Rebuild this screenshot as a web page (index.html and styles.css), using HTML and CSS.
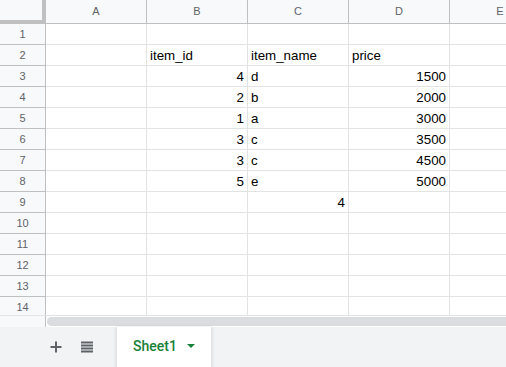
FILE: index.html
```html
<!DOCTYPE html>
<html lang="en">
<head>
  <meta charset="UTF-8" />
  <title>Sheet1</title>
  <link rel="stylesheet" href="styles.css">
</head>
<body>
  <div class="sheet">
    <div class="grid">
      <div class="corner"></div>
      <div class="col-head">A</div>
      <div class="col-head">B</div>
      <div class="col-head">C</div>
      <div class="col-head">D</div>
      <div class="col-head">E</div>

      <div class="row-head">1</div>
      <div class="cell"></div><div class="cell"></div><div class="cell"></div><div class="cell"></div><div class="cell"></div>

      <div class="row-head">2</div>
      <div class="cell"></div><div class="cell">item_id</div><div class="cell">item_name</div><div class="cell">price</div><div class="cell"></div>

      <div class="row-head">3</div>
      <div class="cell"></div><div class="cell num">4</div><div class="cell">d</div><div class="cell num">1500</div><div class="cell"></div>

      <div class="row-head">4</div>
      <div class="cell"></div><div class="cell num">2</div><div class="cell">b</div><div class="cell num">2000</div><div class="cell"></div>

      <div class="row-head">5</div>
      <div class="cell"></div><div class="cell num">1</div><div class="cell">a</div><div class="cell num">3000</div><div class="cell"></div>

      <div class="row-head">6</div>
      <div class="cell"></div><div class="cell num">3</div><div class="cell">c</div><div class="cell num">3500</div><div class="cell"></div>

      <div class="row-head">7</div>
      <div class="cell"></div><div class="cell num">3</div><div class="cell">c</div><div class="cell num">4500</div><div class="cell"></div>

      <div class="row-head">8</div>
      <div class="cell"></div><div class="cell num">5</div><div class="cell">e</div><div class="cell num">5000</div><div class="cell"></div>

      <div class="row-head">9</div>
      <div class="cell"></div><div class="cell"></div><div class="cell num">4</div><div class="cell"></div><div class="cell"></div>

      <div class="row-head">10</div>
      <div class="cell"></div><div class="cell"></div><div class="cell"></div><div class="cell"></div><div class="cell"></div>

      <div class="row-head">11</div>
      <div class="cell"></div><div class="cell"></div><div class="cell"></div><div class="cell"></div><div class="cell"></div>

      <div class="row-head">12</div>
      <div class="cell"></div><div class="cell"></div><div class="cell"></div><div class="cell"></div><div class="cell"></div>

      <div class="row-head">13</div>
      <div class="cell"></div><div class="cell"></div><div class="cell"></div><div class="cell"></div><div class="cell"></div>

      <div class="row-head">14</div>
      <div class="cell"></div><div class="cell"></div><div class="cell"></div><div class="cell"></div><div class="cell"></div>
    </div>

    <div class="hscroll">
      <div class="hscroll-gutter"></div>
      <div class="hscroll-track"><div class="hscroll-thumb"></div></div>
    </div>

    <div class="tabbar">
      <button class="tab-btn" title="Add sheet">
        <svg width="12" height="12" viewBox="0 0 12 12"><path d="M6 0.5v11M0.5 6h11" stroke="#5f6368" stroke-width="2" fill="none"/></svg>
      </button>
      <button class="tab-btn" title="All sheets">
        <svg width="12" height="12" viewBox="0 0 12 12" fill="#5f6368">
          <rect x="0" y="0.5" width="12" height="2"/>
          <rect x="0" y="3.5" width="12" height="2"/>
          <rect x="0" y="6.5" width="12" height="2"/>
          <rect x="0" y="9.5" width="12" height="2"/>
        </svg>
      </button>
      <div class="tab">
        <span class="tab-name">Sheet1</span>
        <span class="tab-arrow"></span>
      </div>
    </div>
  </div>
</body>
</html>
```

FILE: styles.css
```css
body {
  margin: 0;
  background: #fff;
  font-family: 'Liberation Sans', Arial, sans-serif;
}
.sheet {
  width: 506px;
  height: 367px;
  overflow: hidden;
}
.grid {
  display: grid;
  grid-template-columns: 46px 101px 101px 101px 101px 101px;
  grid-template-rows: 24px repeat(14, 21px);
  width: 506px;
  height: 315px;
  overflow: hidden;
}
.corner {
  background: #f8f9fa;
  border-right: 4px solid #c0c0c0;
  border-bottom: 4px solid #c0c0c0;
}
.col-head {
  background: #f8f9fa;
  border-right: 1px solid #c0c0c0;
  border-bottom: 1px solid #c0c0c0;
  color: #5f6368;
  font-size: 11px;
  display: flex;
  align-items: center;
  justify-content: center;
  padding-bottom: 1px;
}
.row-head {
  background: #f8f9fa;
  border-right: 1px solid #c0c0c0;
  border-bottom: 1px solid #c0c0c0;
  color: #5f6368;
  font-size: 11px;
  display: flex;
  align-items: center;
  justify-content: center;
}
.cell {
  border-right: 1px solid #e2e3e3;
  border-bottom: 1px solid #e2e3e3;
  font-size: 10pt;
  line-height: 17px;
  color: #000;
  display: flex;
  align-items: flex-end;
  padding: 0 3px 1px 3px;
  white-space: nowrap;
  overflow: hidden;
}
.cell.num {
  justify-content: flex-end;
}
.hscroll {
  display: flex;
  height: 11px;
  border-top: 1px solid #e2e3e3;
}
.hscroll-gutter {
  width: 45px;
  background: #f8f9fa;
  border-right: 1px solid #c0c0c0;
}
.hscroll-track {
  flex: 1;
  padding: 1px 0 1px 1px;
}
.hscroll-thumb {
  height: 9px;
  background: #dadce0;
  border-radius: 5px 0 0 5px;
}
.tabbar {
  display: flex;
  align-items: stretch;
  height: 40px;
  background: #f1f3f4;
  padding-left: 42px;
}
.tab-btn {
  width: 28px;
  border: none;
  background: none;
  padding: 0;
  margin-right: 3px;
  display: flex;
  align-items: center;
  justify-content: center;
}
.tab {
  margin-left: 13px;
  width: 94px;
  background: #fff;
  box-shadow: 0 1px 3px 1px rgba(60, 64, 67, 0.15);
  display: flex;
  align-items: center;
  padding-left: 16px;
  box-sizing: border-box;
  color: #188038;
}
.tab-name {
  font-family: Roboto, 'Liberation Sans', sans-serif;
  font-weight: 500;
  font-size: 14px;
  margin-top: -2px;
}
.tab-arrow {
  margin-left: 10px;
  width: 0;
  height: 0;
  border-left: 4px solid transparent;
  border-right: 4px solid transparent;
  border-top: 4px solid #188038;
  margin-top: -2px;
}
```
